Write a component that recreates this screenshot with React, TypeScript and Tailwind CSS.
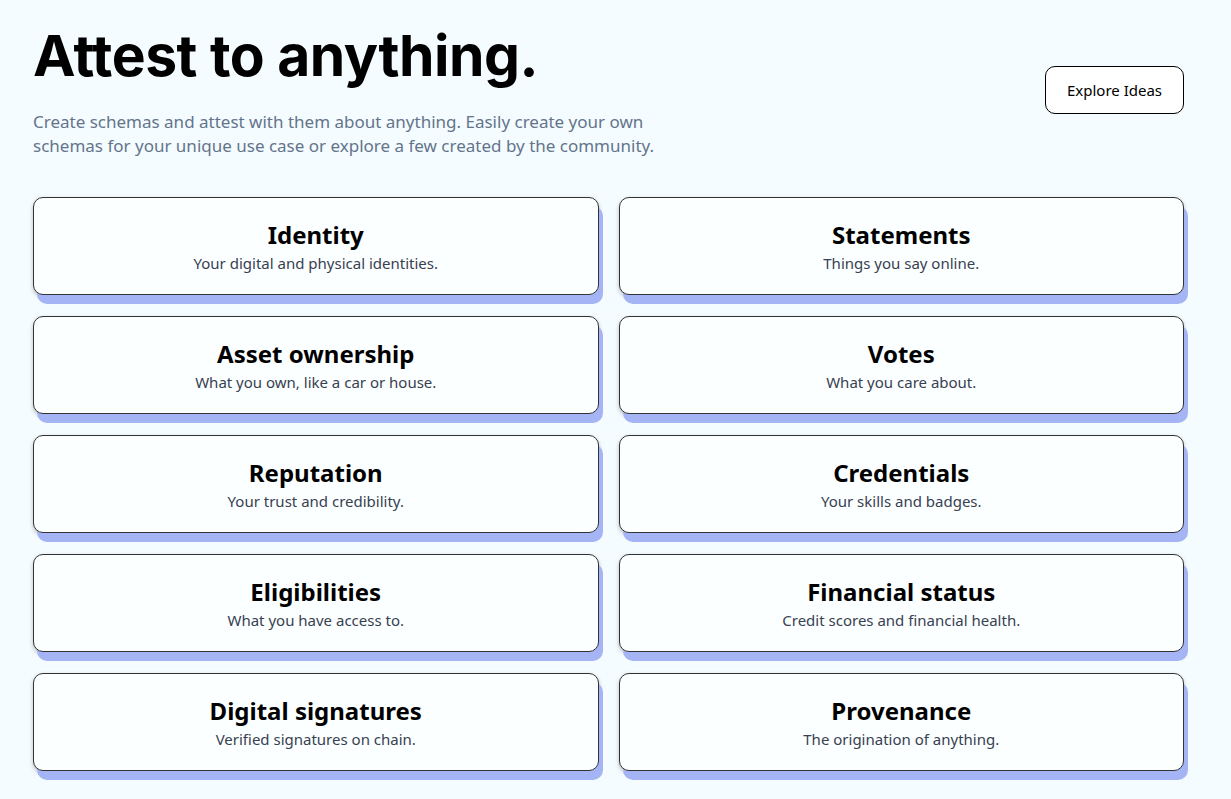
import React from 'react';

const categories = [
  { title: 'Identity', desc: 'Your digital and physical identities.' },
  { title: 'Statements', desc: 'Things you say online.' },
  { title: 'Asset ownership', desc: 'What you own, like a car or house.' },
  { title: 'Votes', desc: 'What you care about.' },
  { title: 'Reputation', desc: 'Your trust and credibility.' },
  { title: 'Credentials', desc: 'Your skills and badges.' },
  { title: 'Eligibilities', desc: 'What you have access to.' },
  { title: 'Financial status', desc: 'Credit scores and financial health.' },
  { title: 'Digital signatures', desc: 'Verified signatures on chain.' },
  { title: 'Provenance', desc: 'The origination of anything.' },
];

const App = () => {
  return (
    <div className="min-h-screen bg-[#f4fcff] font-['Noto_Sans',sans-serif] text-black">
      <div className="w-[1151px] ml-[33px] pt-[22px]">
        {/* Header */}
        <div className="flex justify-between items-start">
          <div>
            <h1 className="font-['Inter',sans-serif] font-bold text-[57px] leading-[68px] tracking-[-0.5px]">
              Attest to anything.
            </h1>
            <p className="mt-[20px] text-[17px] leading-[24px] text-[#64748b] whitespace-nowrap">
              Create schemas and attest with them about anything. Easily create your own
              <br />
              schemas for your unique use case or explore a few created by the community.
            </p>
          </div>
          <button className="mt-[44px] w-[139px] h-[48px] rounded-[10px] border border-black bg-white text-[15px]">
            Explore Ideas
          </button>
        </div>

        {/* Grid */}
        <div className="mt-[39px] grid grid-cols-2 gap-x-[20px] gap-y-[21px]">
          {categories.map((c) => (
            <div
              key={c.title}
              className="h-[98px] rounded-[10px] border border-[#333] bg-[#fcffff] flex flex-col items-center justify-center shadow-[4px_9px_0_#a5b4f5,0_2px_4px_rgba(0,0,0,0.25)]"
            >
              <div className="text-[24px] leading-[30px] font-bold">{c.title}</div>
              <div className="mt-[3px] text-[15px] leading-[20px] text-[#374151]">{c.desc}</div>
            </div>
          ))}
        </div>
      </div>
    </div>
  );
};

export default App;
